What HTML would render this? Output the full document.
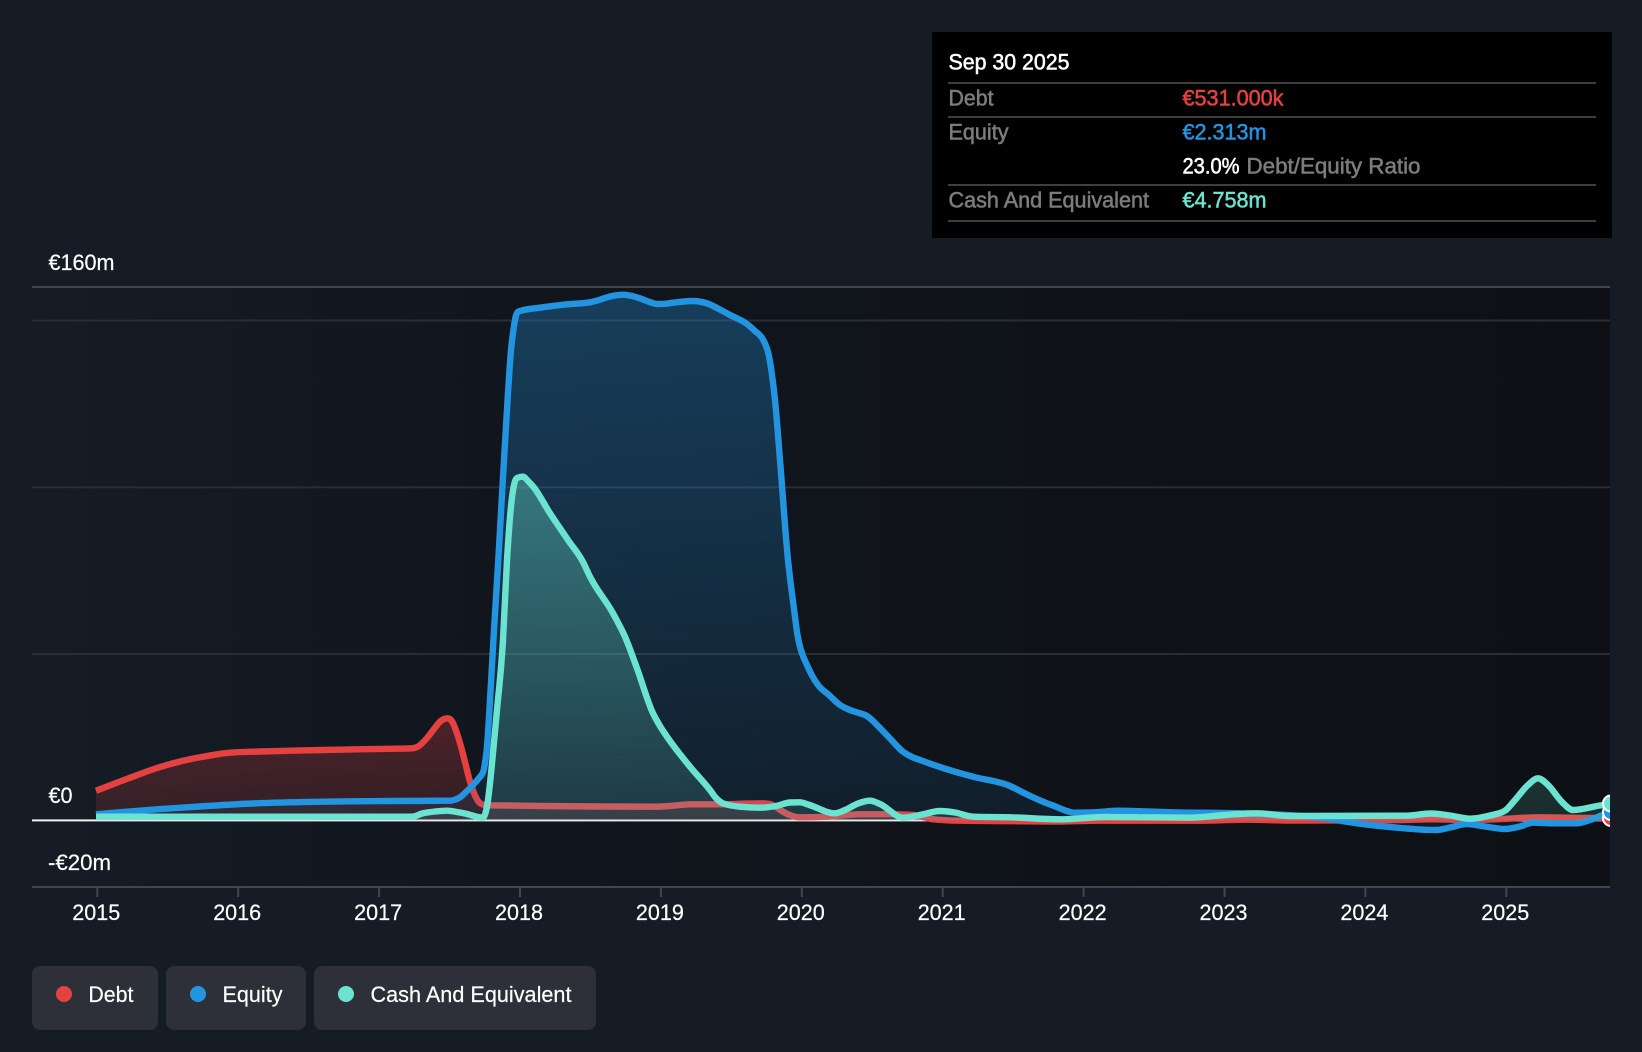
<!DOCTYPE html>
<html lang="en">
<head>
<meta charset="utf-8">
<title>Debt to Equity History</title>
<style>
html,body{margin:0;padding:0;background:#151c25;width:1642px;height:1052px;overflow:hidden}
svg{display:block;font-family:"Liberation Sans",sans-serif}
.m{stroke-width:.55px}
.r{stroke-width:.2px}
</style>
</head>
<body>
<svg width="1642" height="1052" viewBox="0 0 1642 1052" xmlns="http://www.w3.org/2000/svg">
<defs>
<linearGradient id="plotbg" x1="0" y1="0" x2="1" y2="0">
<stop offset="0" stop-color="#151c25"/>
<stop offset="0.3" stop-color="#11161e"/>
<stop offset="1" stop-color="#0d1014"/>
</linearGradient>
<linearGradient id="gd" x1="0" y1="0" x2="0" y2="1">
<stop offset="0" stop-color="#e64141" stop-opacity=".28"/>
<stop offset="1" stop-color="#e64141" stop-opacity=".14"/>
</linearGradient>
<linearGradient id="ge" x1="0" y1="0" x2="0" y2="1">
<stop offset="0" stop-color="#2394df" stop-opacity=".32"/>
<stop offset="1" stop-color="#2394df" stop-opacity=".08"/>
</linearGradient>
<linearGradient id="gc" x1="0" y1="0" x2="0" y2="1">
<stop offset="0" stop-color="#6ce3d0" stop-opacity=".38"/>
<stop offset="1" stop-color="#6ce3d0" stop-opacity=".13"/>
</linearGradient>
<clipPath id="plot"><rect x="32" y="280" width="1578" height="610"/></clipPath>
</defs>

<rect x="0" y="0" width="1642" height="1052" fill="#151c25"/>
<rect x="32" y="287" width="1578" height="600" fill="url(#plotbg)"/>

<!-- grid -->
<rect x="32" y="286" width="1578" height="2" fill="#43464c"/>
<rect x="32" y="319.5" width="1578" height="2" fill="#2a2d33"/>
<rect x="32" y="486.3" width="1578" height="2" fill="#2a2d33"/>
<rect x="32" y="653" width="1578" height="2" fill="#2a2d33"/>
<rect x="32" y="819.4" width="1578" height="2" fill="#f2f2f2"/>
<rect x="32" y="886" width="1578" height="2" fill="#43464c"/>
<g fill="#43464c">
<rect x="96.3" y="887" width="2" height="10"/>
<rect x="237.2" y="887" width="2" height="10"/>
<rect x="378.1" y="887" width="2" height="10"/>
<rect x="519" y="887" width="2" height="10"/>
<rect x="659.9" y="887" width="2" height="10"/>
<rect x="800.8" y="887" width="2" height="10"/>
<rect x="941.7" y="887" width="2" height="10"/>
<rect x="1082.6" y="887" width="2" height="10"/>
<rect x="1223.5" y="887" width="2" height="10"/>
<rect x="1364.4" y="887" width="2" height="10"/>
<rect x="1505.3" y="887" width="2" height="10"/>
</g>

<g clip-path="url(#plot)" stroke-linejoin="round" stroke-linecap="butt">
<!-- Debt -->
<polygon class="s" fill="url(#gd)" points="96,790.7 132,777 157,768 182,761 207,756 230,752.7 260,751.5 290,750.7 323,750 357,749.3 390,748.8 412,748.3 418,746.5 427,738 434,729 440,721.7 444,719 447.3,718.3 450.5,719.5 453,723 456.5,732 460,743 465,762 470,781.7 474,793 478,801 482,804.3 487,805.3 510,805.5 543,806 600,806.5 657,806.7 672,805.8 690,804.3 723,804.3 745,803.6 763,803.3 770,804 776,807 783,811.7 791,815.5 800,817.3 826,816.7 860,814.3 893,814.3 913,815 923,817 933,819.3 960,820.7 993,821 1060,821.5 1100,820.7 1200,820.7 1246,819.7 1290,820.5 1400,820 1432,819.3 1470,820 1500,819 1540,817.3 1600,818 1612,818 1612,820.4 96,820.4"/>
<polyline class="s" fill="none" stroke="#e64141" stroke-width="6.4" points="96,790.7 132,777 157,768 182,761 207,756 230,752.7 260,751.5 290,750.7 323,750 357,749.3 390,748.8 412,748.3 418,746.5 427,738 434,729 440,721.7 444,719 447.3,718.3 450.5,719.5 453,723 456.5,732 460,743 465,762 470,781.7 474,793 478,801 482,804.3 487,805.3 510,805.5 543,806 600,806.5 657,806.7 672,805.8 690,804.3 723,804.3 745,803.6 763,803.3 770,804 776,807 783,811.7 791,815.5 800,817.3 826,816.7 860,814.3 893,814.3 913,815 923,817 933,819.3 960,820.7 993,821 1060,821.5 1100,820.7 1200,820.7 1246,819.7 1290,820.5 1400,820 1432,819.3 1470,820 1500,819 1540,817.3 1600,818 1612,818"/>
<!-- Equity -->
<polygon class="s" fill="url(#ge)" points="96,814.3 157,809.3 207,806 257,803.3 323,801.7 390,801 450,800.7 455,799.6 460,797.3 467,791 473,785 479,778 483.3,771.7 485,763 486.7,750 490,700 494,630 498.3,560 503,477 508,393 511,350 513,333 515,320 516.5,314 518.3,311.7 522,310.5 540,307.7 567,304.3 590,302.3 598,300.3 607,297.3 615,295.5 623,294.7 631,295.8 640,298.3 649,301.8 657,304 665,303.8 673,302.7 693,301 700,301.7 707,303.3 718,308.5 730,315 747,324 755,331 763.3,340 766,346 768.3,353 772,375 775,400 780,460 788,560 791.5,590 795,616.7 797,632 800,646.7 803,656 807,665 812,675.5 818,685 829,695 840,705 850,710 859,713 867,716 872,720 877,725 890,738.5 903,751.7 911,756.5 920,760 947,769.3 973,776.7 1010,786 1025,793.5 1043,801.7 1056,806.7 1067,811 1074,812.7 1095,812.3 1117,810.7 1173,812.3 1240,813.3 1290,815.2 1323,818 1357,823.3 1407,828.5 1425,829.8 1436,830 1450,827.5 1467,824 1485,826.5 1505,829 1520,826.5 1533,822.7 1555,823.3 1577,823.3 1590,820 1603,815 1612,813 1612,820.4 96,820.4"/>
<polyline class="s" fill="none" stroke="#2394df" stroke-width="6.4" points="96,814.3 157,809.3 207,806 257,803.3 323,801.7 390,801 450,800.7 455,799.6 460,797.3 467,791 473,785 479,778 483.3,771.7 485,763 486.7,750 490,700 494,630 498.3,560 503,477 508,393 511,350 513,333 515,320 516.5,314 518.3,311.7 522,310.5 540,307.7 567,304.3 590,302.3 598,300.3 607,297.3 615,295.5 623,294.7 631,295.8 640,298.3 649,301.8 657,304 665,303.8 673,302.7 693,301 700,301.7 707,303.3 718,308.5 730,315 747,324 755,331 763.3,340 766,346 768.3,353 772,375 775,400 780,460 788,560 791.5,590 795,616.7 797,632 800,646.7 803,656 807,665 812,675.5 818,685 829,695 840,705 850,710 859,713 867,716 872,720 877,725 890,738.5 903,751.7 911,756.5 920,760 947,769.3 973,776.7 1010,786 1025,793.5 1043,801.7 1056,806.7 1067,811 1074,812.7 1095,812.3 1117,810.7 1173,812.3 1240,813.3 1290,815.2 1323,818 1357,823.3 1407,828.5 1425,829.8 1436,830 1450,827.5 1467,824 1485,826.5 1505,829 1520,826.5 1533,822.7 1555,823.3 1577,823.3 1590,820 1603,815 1612,813"/>
<!-- Cash -->
<polygon class="s" fill="url(#gc)" points="96,816.7 412,816.7 423,813.3 435,811.5 447,810.7 457,812 467,814 478,817 483,817.7 485.5,813 488,800 491.7,766.7 496.7,713 503,640 507,560 511.7,500 514,485 516.7,478.3 520,477 523.3,476.7 528,481 533.3,486.7 550,513.3 568,540 583,562 590,576.7 613,613.3 625,636.7 637,668.3 653,713.3 660,726 667,736.7 690,766.7 710,790 716,798 723,803.3 740,806.7 760,807.7 776,806 790,802.5 800,802.3 808,804.5 835,813.3 845,810 858,803.5 870,800.7 880,804 903,817.7 920,815 940,811 955,812.5 973,816.7 1010,817.3 1060,819.3 1106,817 1190,817.7 1225,815 1257,813.3 1290,816 1407,815.7 1431,813.5 1450,815.5 1470,818.7 1490,815.5 1505,810.7 1515,800 1528,785 1538,778.3 1548,785 1562,802 1573,810 1603,805 1612,804 1612,820.4 96,820.4"/>
<polyline class="s" fill="none" stroke="#6ce3d0" stroke-width="6.4" points="96,816.7 412,816.7 423,813.3 435,811.5 447,810.7 457,812 467,814 478,817 483,817.7 485.5,813 488,800 491.7,766.7 496.7,713 503,640 507,560 511.7,500 514,485 516.7,478.3 520,477 523.3,476.7 528,481 533.3,486.7 550,513.3 568,540 583,562 590,576.7 613,613.3 625,636.7 637,668.3 653,713.3 660,726 667,736.7 690,766.7 710,790 716,798 723,803.3 740,806.7 760,807.7 776,806 790,802.5 800,802.3 808,804.5 835,813.3 845,810 858,803.5 870,800.7 880,804 903,817.7 920,815 940,811 955,812.5 973,816.7 1010,817.3 1060,819.3 1106,817 1190,817.7 1225,815 1257,813.3 1290,816 1407,815.7 1431,813.5 1450,815.5 1470,818.7 1490,815.5 1505,810.7 1515,800 1528,785 1538,778.3 1548,785 1562,802 1573,810 1603,805 1612,804"/>
<!-- end markers -->
<circle cx="1611" cy="818" r="8" fill="#e64141" stroke="#fff" stroke-width="2"/>
<circle cx="1611" cy="812" r="8" fill="#2394df" stroke="#fff" stroke-width="2"/>
<circle cx="1611" cy="803.5" r="8" fill="#6ce3d0" stroke="#fff" stroke-width="2"/>
</g>

<!-- y labels -->
<g fill="#fff" stroke="#fff" class="r" font-size="22">
<text x="48.5" y="270" textLength="66" lengthAdjust="spacingAndGlyphs">€160m</text>
<text x="48.5" y="803" textLength="24" lengthAdjust="spacingAndGlyphs">€0</text>
<text x="48" y="870" textLength="63" lengthAdjust="spacingAndGlyphs">-€20m</text>
</g>

<!-- x labels -->
<g fill="#fff" stroke="#fff" class="r" font-size="22">
<text x="72.3" y="920" textLength="48" lengthAdjust="spacingAndGlyphs">2015</text>
<text x="213.2" y="920" textLength="48" lengthAdjust="spacingAndGlyphs">2016</text>
<text x="354.1" y="920" textLength="48" lengthAdjust="spacingAndGlyphs">2017</text>
<text x="495" y="920" textLength="48" lengthAdjust="spacingAndGlyphs">2018</text>
<text x="635.9" y="920" textLength="48" lengthAdjust="spacingAndGlyphs">2019</text>
<text x="776.8" y="920" textLength="48" lengthAdjust="spacingAndGlyphs">2020</text>
<text x="917.7" y="920" textLength="48" lengthAdjust="spacingAndGlyphs">2021</text>
<text x="1058.6" y="920" textLength="48" lengthAdjust="spacingAndGlyphs">2022</text>
<text x="1199.5" y="920" textLength="48" lengthAdjust="spacingAndGlyphs">2023</text>
<text x="1340.4" y="920" textLength="48" lengthAdjust="spacingAndGlyphs">2024</text>
<text x="1481.3" y="920" textLength="48" lengthAdjust="spacingAndGlyphs">2025</text>
</g>

<!-- tooltip -->
<rect x="932" y="32" width="680" height="206" fill="#000"/>
<g fill="#3f3f3f">
<rect x="948" y="82" width="648" height="2"/>
<rect x="948" y="116" width="648" height="2"/>
<rect x="948" y="184" width="648" height="2"/>
<rect x="948" y="220" width="648" height="2"/>
</g>
<g font-size="22">
<text x="948.5" y="69.5" fill="#fff" stroke="#fff" class="m" textLength="121" lengthAdjust="spacingAndGlyphs">Sep 30 2025</text>
<text x="948.5" y="105.5" fill="#7c7c7c" stroke="#7c7c7c" class="m" textLength="45" lengthAdjust="spacingAndGlyphs">Debt</text>
<text x="948.5" y="139.5" fill="#7c7c7c" stroke="#7c7c7c" class="m" textLength="60" lengthAdjust="spacingAndGlyphs">Equity</text>
<text x="948.5" y="207.5" fill="#7c7c7c" stroke="#7c7c7c" class="m" textLength="200.5" lengthAdjust="spacingAndGlyphs">Cash And Equivalent</text>
<text x="1182.5" y="105.5" fill="#e64141" stroke="#e64141" class="m" textLength="101" lengthAdjust="spacingAndGlyphs">€531.000k</text>
<text x="1182.5" y="139.5" fill="#2394df" stroke="#2394df" class="m" textLength="84" lengthAdjust="spacingAndGlyphs">€2.313m</text>
<text x="1182.5" y="173.5" fill="#fff" stroke="#fff" class="m" textLength="57" lengthAdjust="spacingAndGlyphs">23.0%</text>
<text x="1246.5" y="173.5" fill="#7c7c7c" stroke="#7c7c7c" class="m" textLength="174" lengthAdjust="spacingAndGlyphs">Debt/Equity Ratio</text>
<text x="1182.5" y="207.5" fill="#6ce3d0" stroke="#6ce3d0" class="m" textLength="84" lengthAdjust="spacingAndGlyphs">€4.758m</text>
</g>

<!-- legend -->
<rect x="32" y="966" width="126" height="64" rx="8" fill="#2d3039"/>
<rect x="166" y="966" width="140" height="64" rx="8" fill="#2d3039"/>
<rect x="314" y="966" width="282" height="64" rx="8" fill="#2d3039"/>
<circle cx="64" cy="994" r="8" fill="#e64141"/>
<circle cx="198" cy="994" r="8" fill="#2394df"/>
<circle cx="346" cy="994" r="8" fill="#6ce3d0"/>
<g fill="#fff" stroke="#fff" class="r" font-size="22">
<text x="88.4" y="1002" textLength="45" lengthAdjust="spacingAndGlyphs">Debt</text>
<text x="222.5" y="1002" textLength="60" lengthAdjust="spacingAndGlyphs">Equity</text>
<text x="370.5" y="1002" textLength="201" lengthAdjust="spacingAndGlyphs">Cash And Equivalent</text>
</g>
</svg>
<script>
(function(){
  var NS="http://www.w3.org/2000/svg";
  function sgn(v){return v<0?-1:1;}
  function smooth(p){
    var n=p.length,i,dx=[],sl=[],t=[];
    for(i=0;i<n-1;i++){dx[i]=p[i+1][0]-p[i][0];sl[i]=(p[i+1][1]-p[i][1])/dx[i];}
    t[0]=sl[0];t[n-1]=sl[n-2];
    for(i=1;i<n-1;i++){
      var h0=dx[i-1],h1=dx[i],s0=sl[i-1],s1=sl[i],q=(s0*h1+s1*h0)/(h0+h1);
      t[i]=(sgn(s0)+sgn(s1))*Math.min(Math.abs(s0),Math.abs(s1),0.5*Math.abs(q))||0;
    }
    var d="M"+p[0][0]+","+p[0][1];
    for(i=0;i<n-1;i++){
      var h=dx[i]/3;
      d+="C"+(p[i][0]+h).toFixed(2)+","+(p[i][1]+t[i]*h).toFixed(2)+" "+(p[i+1][0]-h).toFixed(2)+","+(p[i+1][1]-t[i+1]*h).toFixed(2)+" "+p[i+1][0]+","+p[i+1][1];
    }
    return d;
  }
  var els=document.querySelectorAll(".s");
  for(var k=0;k<els.length;k++){
    var e=els[k],pts=e.getAttribute("points").trim().split(/\s+/).map(function(s){return s.split(",").map(Number);});
    var isArea=e.tagName.toLowerCase()==="polygon",d;
    if(isArea){
      var base=pts.slice(-2);
      d=smooth(pts.slice(0,-2))+"L"+base[0].join(",")+"L"+base[1].join(",")+"Z";
    }else{d=smooth(pts);}
    var path=document.createElementNS(NS,"path");
    path.setAttribute("d",d);
    path.setAttribute("fill",e.getAttribute("fill"));
    if(e.getAttribute("stroke")){path.setAttribute("stroke",e.getAttribute("stroke"));path.setAttribute("stroke-width",e.getAttribute("stroke-width"));}
    e.parentNode.replaceChild(path,e);
  }
})();
</script>
</body>
</html>
